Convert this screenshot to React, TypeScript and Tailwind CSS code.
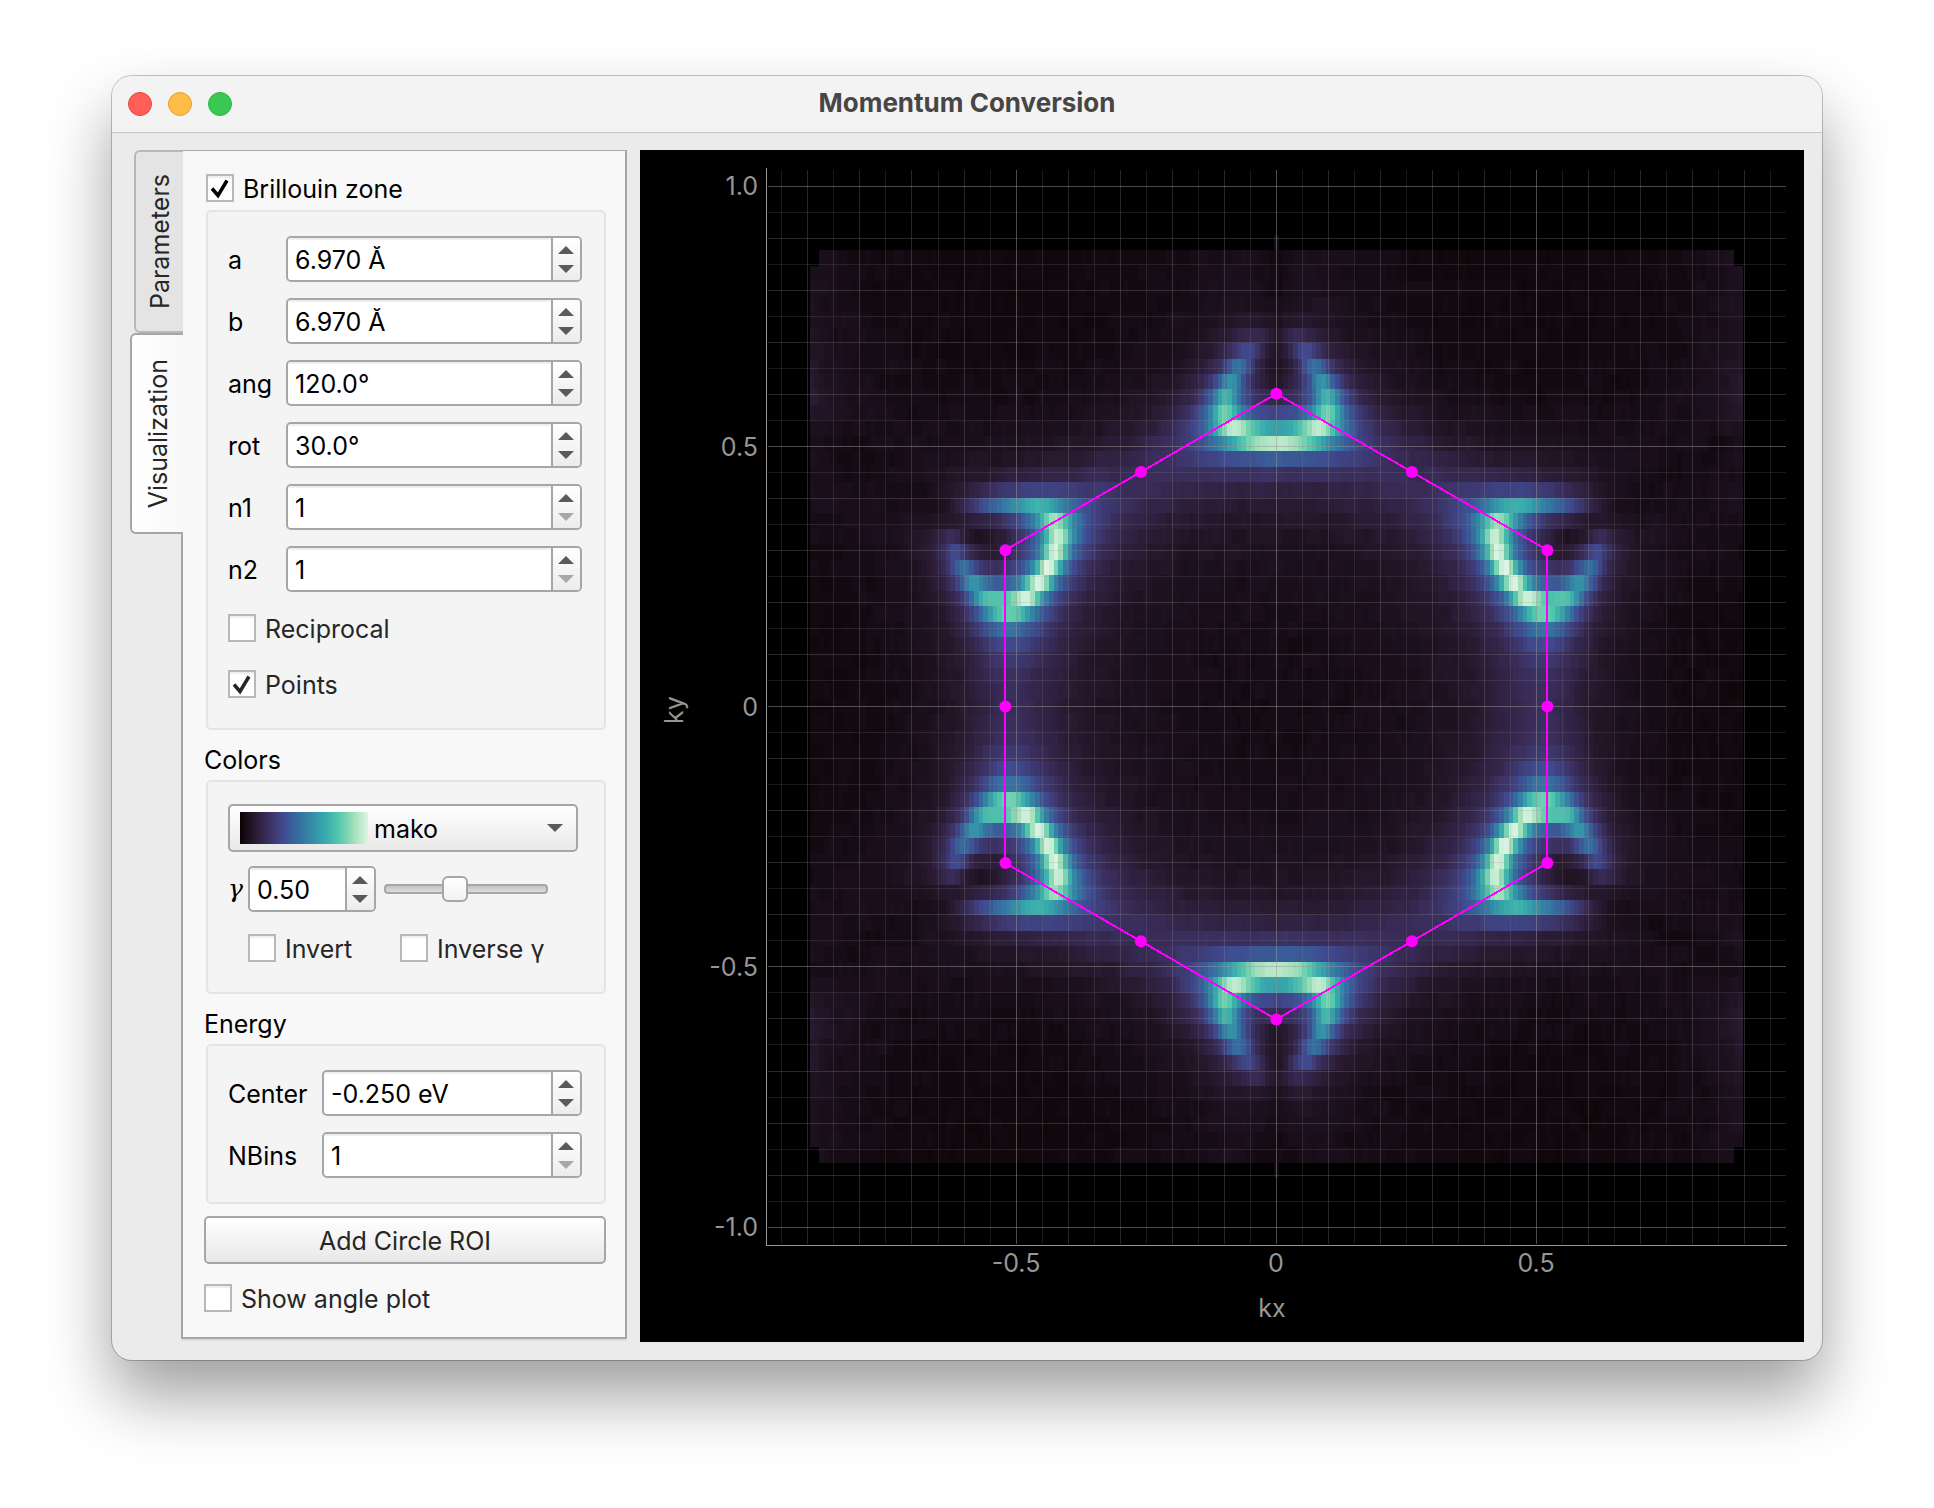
import { useState } from "react";
import type { ReactNode } from "react";

const MAKO = [
  [11, 4, 5], [40, 25, 47], [59, 47, 94], [64, 73, 142], [54, 106, 159],
  [52, 138, 166], [56, 170, 172], [84, 201, 173], [160, 223, 185], [222, 245, 229],
];

// plot geometry, in viewBox units
const UNIT = 520.6;
const CX = 636.4;
const CY = 556.6;
const COLS = 199;
const ROWS = 61;
const CELL_W = 4.69;
const CELL_H = 15.47;
const LEVELS = 96;

function mako(v: number) {
  const t = Math.min(Math.max(v, 0), 1) * (MAKO.length - 1);
  const i = Math.min(Math.floor(t), MAKO.length - 2);
  const c = MAKO[i].map((lo, n) => Math.round(lo + (MAKO[i + 1][n] - lo) * (t - i)));
  return `rgb(${c.join(",")})`;
}

function noise(x: number, y: number) {
  const s = Math.sin(x * 12.9898 + y * 78.233) * 43758.5453;
  return s - Math.floor(s);
}

// honeycomb lattice spectral weight at a constant energy
function intensity(kx: number, ky: number) {
  const a = 6.97;
  const p = (a * kx) / Math.sqrt(3);
  const c = 2 * Math.cos((a * ky) / 2);
  const re = Math.cos(p) + c * Math.cos(p / 2);
  const im = Math.sin(p) - c * Math.sin(p / 2);
  const f = Math.hypot(re, im);
  const weight = 0.008 + (1 + re / (f || 1)) / 2;
  return (weight * 0.0118) / ((f - 0.57) ** 2 + 0.01) + 0.006 / (4 * f * f + 0.6);
}

function heatmapPaths() {
  const paths: string[] = Array(LEVELS + 1).fill("");
  for (let r = 0; r < ROWS; r++) {
    const y0 = Math.round(CY + (r - ROWS / 2) * CELL_H);
    const y1 = Math.round(CY + (r + 1 - ROWS / 2) * CELL_H);
    let first = 0;
    if (r === 0 || r === ROWS - 1) first = (COLS - 1) / 2;
    else if (r === 1 || r === ROWS - 2) first = 2;
    for (let q = first; q < COLS - first; q++) {
      const x0 = Math.round(CX + (q - COLS / 2) * CELL_W);
      const x1 = Math.round(CX + (q + 1 - COLS / 2) * CELL_W);
      const kx = ((q + 0.5 - COLS / 2) * CELL_W) / UNIT;
      const ky = ((ROWS / 2 - r - 0.5) * CELL_H) / UNIT;
      let v = 0;
      for (const dx of [-0.008, 0, 0.008]) for (const dy of [-0.008, 0, 0.008]) v += intensity(kx + dx, ky + dy) / 9;
      const grain = (noise(q, r) + noise(q + 1, r) + noise(q + 2, r)) / 3 - 0.5;
      v = Math.sqrt(v + 0.0005) - 0.012 + grain * 0.03;
      const level = Math.round(Math.min(Math.max(v, 0), 1) * LEVELS);
      paths[level] += `M${x0} ${y0}H${x1}V${y1}H${x0}z`;
    }
  }
  return paths;
}

const HEATMAP = heatmapPaths();

function hexagon() {
  const corners = Array.from({ length: 6 }, (_, i) => {
    const t = (Math.PI / 3) * i + Math.PI / 2;
    return [CX + 0.601 * UNIT * Math.cos(t), CY - 0.601 * UNIT * Math.sin(t)];
  });
  const mids = corners.map(([x, y], i) => {
    const [nx, ny] = corners[(i + 1) % 6];
    return [(x + nx) / 2, (y + ny) / 2];
  });
  return { corners, points: [...corners, ...mids] };
}

function gridColor(i: number) {
  if (i % 10 === 0) return "rgba(150,150,150,0.5)";
  return i % 2 === 0 ? "rgba(150,150,150,0.26)" : "rgba(150,150,150,0.17)";
}

function Plot() {
  const { corners, points } = hexagon();
  const xs = Array.from({ length: 39 }, (_, i) => i - 19);
  const ys = Array.from({ length: 41 }, (_, i) => i - 20);
  return (
    <svg viewBox="0 0 1164 1192" className="block w-full bg-black" role="img" aria-label="Constant energy map">
      <g shapeRendering="crispEdges">
        {HEATMAP.map((d, i) => d && <path key={i} d={d} fill={mako(i / LEVELS)} />)}
        {xs.map((i) => (
          <rect key={i} x={Math.floor(CX + (i * UNIT) / 20)} y={20} width={1} height={1074} fill={gridColor(i)} />
        ))}
        {ys.map((i) => (
          <rect key={i} x={128} y={Math.floor(CY + (i * UNIT) / 20)} width={1018} height={1} fill={gridColor(i)} />
        ))}
        <path d="M126.5 18V1095.5H1147" fill="none" stroke="#969696" />
        <polygon points={corners.map((p) => p.join(",")).join(" ")} fill="none" stroke="#f0f" strokeWidth={2} />
      </g>
      {points.map(([x, y], i) => (
        <circle key={i} cx={x} cy={y} r={6} fill="#f0f" />
      ))}
      <g fill="#969696" fontSize={25}>
        <g textAnchor="end">
          <text x={118} y={45}>1.0</text>
          <text x={118} y={306}>0.5</text>
          <text x={118} y={566}>0</text>
          <text x={118} y={826}>-0.5</text>
          <text x={118} y={1086}>-1.0</text>
        </g>
        <g textAnchor="middle">
          <text x={376} y={1122}>-0.5</text>
          <text x={636} y={1122}>0</text>
          <text x={896} y={1122}>0.5</text>
          <text x={632} y={1167}>kx</text>
          <text transform="translate(43 560) rotate(-90)">ky</text>
        </g>
      </g>
    </svg>
  );
}

function CheckBox({ label, checked = false, strong = false }: { label: string; checked?: boolean; strong?: boolean }) {
  return (
    <label className={`flex h-7 items-center gap-[9px] ${strong ? "text-black" : "text-[#262626]"}`}>
      <span className="grid size-7 shrink-0">
        <input
          type="checkbox"
          defaultChecked={checked}
          className="peer col-start-1 row-start-1 size-7 appearance-none border-2 border-[#b8b8b8] bg-white shadow-[inset_0_2px_1px_#eee]"
        />
        <svg viewBox="0 0 28 28" className="pointer-events-none invisible col-start-1 row-start-1 peer-checked:visible">
          <path d="M6 14.500L12 21.500L21 6.500" fill="none" stroke="currentColor" strokeWidth="3.500" />
        </svg>
      </span>
      <span className="pt-0.5 whitespace-nowrap">{label}</span>
    </label>
  );
}

function Arrow({ down = false }: { down?: boolean }) {
  return (
    <svg viewBox="0 0 16 8" className="h-2 w-4">
      <path d={down ? "M0 0H16L8 8z" : "M0 8H16L8 0z"} fill="currentColor" />
    </svg>
  );
}

function SpinBox({ id, value, atMin = false }: { id: string; value: string; atMin?: boolean }) {
  return (
    <div className="flex h-[46px] min-w-0 overflow-hidden rounded-[5px] border-2 border-[#a6a6a6] bg-white">
      <input
        id={id}
        defaultValue={value}
        className="min-w-0 flex-1 px-[7px] pt-0.5 text-black shadow-[inset_0_2px_1px_#eee] outline-none"
      />
      <div className="flex w-[29px] shrink-0 flex-col border-l-2 border-[#a6a6a6] bg-linear-to-b from-white to-[#ececec] pr-0.5 text-[#5a5a5a]">
        <button type="button" aria-label="Increase" className="flex flex-1 items-end justify-center pb-[5px]">
          <Arrow />
        </button>
        <button
          type="button"
          aria-label="Decrease"
          disabled={atMin}
          className="flex flex-1 items-start justify-center pt-[6px] disabled:text-[#a8a8a8]"
        >
          <Arrow down />
        </button>
      </div>
    </div>
  );
}

type Field = { label: string; value: string; atMin?: boolean };

function Fields({ fields, className }: { fields: Field[]; className: string }) {
  return (
    <div className={`grid items-center gap-y-4 ${className}`}>
      {fields.map((row) => (
        <div key={row.label} className="contents">
          <label htmlFor={row.label} className="pt-0.5">{row.label}</label>
          <SpinBox id={row.label} value={row.value} atMin={row.atMin} />
        </div>
      ))}
    </div>
  );
}

function Group({ className, children }: { className: string; children: ReactNode }) {
  return (
    <div className={`ml-0.5 rounded-[5px] border-2 border-[#e4e4e4] bg-[#f4f4f4] pr-[22px] pl-5 ${className}`}>
      {children}
    </div>
  );
}

const lattice: Field[] = [
  { label: "a", value: "6.970 Å" },
  { label: "b", value: "6.970 Å" },
  { label: "ang", value: "120.0°" },
  { label: "rot", value: "30.0°" },
  { label: "n1", value: "1", atMin: true },
  { label: "n2", value: "1", atMin: true },
];

const energy: Field[] = [
  { label: "Center", value: "-0.250 eV" },
  { label: "NBins", value: "1", atMin: true },
];

function Controls() {
  return (
    <div className="mb-[3px] w-[446px] border-2 border-t border-[#a6a6a6] bg-[#f8f8f8] pt-[23px] pr-[19px] pb-[25px] pl-[21px] shadow-[0_2px_0_#dedede]">
      <div className="ml-0.5">
        <CheckBox label="Brillouin zone" checked strong />
      </div>
      <Group className="mt-2 pt-6 pb-[30px]">
        <Fields fields={lattice} className="grid-cols-[58px_1fr]" />
        <div className="mt-[22px] flex flex-col gap-7">
          <CheckBox label="Reciprocal" />
          <CheckBox label="Points" checked />
        </div>
      </Group>

      <h2 className="mt-4 h-7 leading-7">Colors</h2>
      <Group className="mt-1.5 pt-[22px] pb-[30px]">
        <div className="relative mr-1">
          <select
            aria-label="Colormap"
            className="block h-12 w-full appearance-none rounded-[5px] border-2 border-[#a6a6a6] bg-linear-to-b from-white to-[#e9e9e9] pt-0.5 pl-[144px] text-black"
          >
            <option>mako</option>
          </select>
          <span className="pointer-events-none absolute top-2 left-3 h-8 w-32 bg-[linear-gradient(to_right,#0b0405,#28192f,#3b2f5e,#40498e,#366a9f,#348aa6,#38aaac,#54c9ad,#a0dfb9,#def5e5)]" />
          <span className="pointer-events-none absolute inset-y-0 right-[15px] flex items-center text-[#5a5a5a]">
            <Arrow down />
          </span>
        </div>
        <div className="mt-3.5 flex items-center">
          <label htmlFor="gamma" className="w-5 shrink-0 font-['DejaVu_Serif','Liberation_Serif',serif] text-[25px] italic">
            γ
          </label>
          <div className="w-32 shrink-0">
            <SpinBox id="gamma" value="0.50" />
          </div>
          <input
            type="range"
            aria-label="Gamma"
            defaultValue={42}
            className="ml-2 h-[26px] w-[164px] appearance-none bg-transparent [&::-webkit-slider-runnable-track]:h-[10px] [&::-webkit-slider-runnable-track]:rounded-[4px] [&::-webkit-slider-runnable-track]:border-2 [&::-webkit-slider-runnable-track]:border-[#a6a6a6] [&::-webkit-slider-runnable-track]:bg-linear-to-b [&::-webkit-slider-runnable-track]:from-[#c4c4c4] [&::-webkit-slider-runnable-track]:to-[#dcdcdc] [&::-webkit-slider-thumb]:-mt-[10px] [&::-webkit-slider-thumb]:size-[26px] [&::-webkit-slider-thumb]:appearance-none [&::-webkit-slider-thumb]:rounded-[6px] [&::-webkit-slider-thumb]:border-2 [&::-webkit-slider-thumb]:border-[#a6a6a6] [&::-webkit-slider-thumb]:bg-linear-to-b [&::-webkit-slider-thumb]:from-white [&::-webkit-slider-thumb]:to-[#f2f2f2]"
          />
        </div>
        <div className="mt-[22px] ml-5 grid grid-cols-[152px_1fr]">
          <CheckBox label="Invert" />
          <CheckBox label="Inverse γ" />
        </div>
      </Group>

      <h2 className="mt-4 h-7 leading-7">Energy</h2>
      <Group className="mt-1.5 pt-6 pb-6">
        <Fields fields={energy} className="grid-cols-[94px_1fr]" />
      </Group>

      <button
        type="button"
        className="mt-3 h-12 w-full rounded-[5px] border-2 border-[#a6a6a6] bg-linear-to-b from-white to-[#e8e8e8] pt-0.5 text-[#262626]"
      >
        Add Circle ROI
      </button>
      <div className="mt-5">
        <CheckBox label="Show angle plot" />
      </div>
    </div>
  );
}

export default function App() {
  const [tab, setTab] = useState("Visualization");
  return (
    <div className="min-h-screen bg-white px-28 pt-[76px] pb-[148px] font-['Inter','Liberation_Sans',sans-serif] text-[25px] leading-7 text-black">
      <div className="overflow-hidden rounded-[20px] bg-[#ebebeb] shadow-[0_0_0_1px_rgba(0,0,0,0.22),0_36px_66px_rgba(0,0,0,0.38)]">
        <header className="grid h-[57px] grid-cols-[1fr_auto_1fr] items-center border-b border-[#c6c6c6] bg-[#f3f3f3] px-4">
          <div className="flex gap-4">
            <button type="button" aria-label="Close" className="size-6 rounded-full border border-[#e2463f] bg-[#ff5f57]" />
            <button type="button" aria-label="Minimize" className="size-6 rounded-full border border-[#e0a032] bg-[#febc47]" />
            <button type="button" aria-label="Zoom" className="size-6 rounded-full border border-[#2fb344] bg-[#39c853]" />
          </div>
          <h1 className="pb-0.5 text-[26px] font-bold text-[#464646]">Momentum Conversion</h1>
        </header>
        <main className="flex pt-[17px] pr-[18px] pb-[18px] pl-[18px]">
          <div role="tablist" aria-orientation="vertical" className="relative z-10 -mr-0.5 flex w-[53px] shrink-0 flex-col items-end">
            {["Parameters", "Visualization"].map((name) => (
              <button
                key={name}
                type="button"
                role="tab"
                aria-selected={tab === name}
                onClick={() => setTab(name)}
                className="flex h-[183px] w-[49px] items-center justify-center rounded-l-[6px] border-2 border-r-0 border-[#b8b8b8] bg-[#e4e4e4] text-[#262626] aria-selected:h-[201px] aria-selected:w-[53px] aria-selected:border-[#a6a6a6] aria-selected:bg-linear-to-r aria-selected:from-white aria-selected:to-[#f8f8f8]"
              >
                <span className="rotate-180 [writing-mode:vertical-rl]">{name}</span>
              </button>
            ))}
          </div>
          <Controls />
          <div className="ml-[13px] min-w-0 flex-1">
            <Plot />
          </div>
        </main>
      </div>
    </div>
  );
}
